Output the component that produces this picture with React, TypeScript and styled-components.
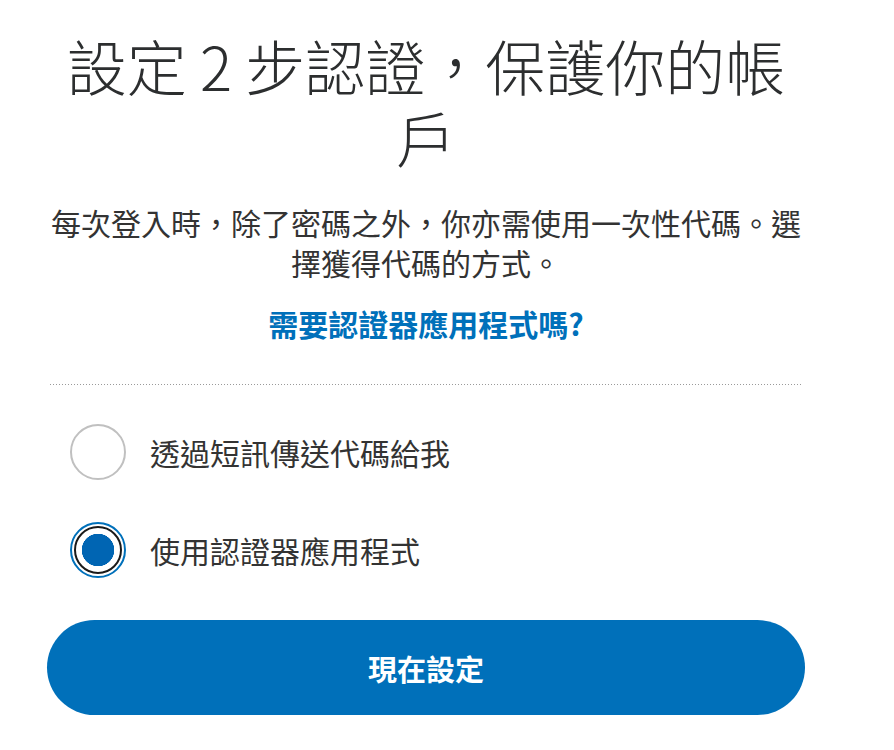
import React, { useState } from "react";
import styled, { createGlobalStyle } from "styled-components";

const GlobalStyle = createGlobalStyle`
  body {
    margin: 0;
    background: #ffffff;
    font-family: "Noto Sans CJK TC", "Liberation Sans", sans-serif;
    color: #2c2e2f;
  }
`;

const options = [
  { id: "sms", label: "透過短訊傳送代碼給我" },
  { id: "app", label: "使用認證器應用程式" },
];

const App = () => {
  const [selected, setSelected] = useState("app");

  return (
    <>
      <GlobalStyle />
      <Page>
        <Title>設定 2 步認證，保護你的帳戶</Title>
        <Lead>每次登入時，除了密碼之外，你亦需使用一次性代碼。選擇獲得代碼的方式。</Lead>
        <HelpLink href="#">需要認證器應用程式嗎?</HelpLink>
        <Divider />
        <Options>
          {options.map((option) => (
            <Option key={option.id} onClick={() => setSelected(option.id)}>
              <Radio $checked={selected === option.id} />
              <OptionLabel>{option.label}</OptionLabel>
            </Option>
          ))}
        </Options>
        <PrimaryButton>現在設定</PrimaryButton>
      </Page>
    </>
  );
};

const Page = styled.main`
  display: flex;
  flex-direction: column;
  align-items: center;
  width: 758px;
  margin-left: 47px;
  padding-top: 29px;
`;

const Title = styled.h1`
  margin: 0;
  font-size: 60px;
  line-height: 72px;
  font-weight: 300;
  text-align: center;
  color: #2c2e2f;
`;

const Lead = styled.p`
  margin: 29px 0 0;
  font-size: 30px;
  line-height: 40px;
  font-weight: 400;
  text-align: center;
  color: #333333;
`;

const HelpLink = styled.a`
  margin-top: 21px;
  font-size: 30px;
  line-height: 40px;
  font-weight: 700;
  color: #0070ba;
  text-decoration: none;
`;

const Divider = styled.hr`
  align-self: stretch;
  margin: 41px 3px 0;
  height: 1px;
  border: none;
  background-image: linear-gradient(to right, #9a9a9a 1px, transparent 1px);
  background-size: 3px 1px;
`;

const Options = styled.div`
  align-self: stretch;
  display: flex;
  flex-direction: column;
  gap: 42px;
  margin-top: 39px;
  padding-left: 23px;
`;

const Option = styled.label`
  display: flex;
  align-items: center;
  gap: 24px;
  cursor: pointer;
`;

const Radio = styled.span<{ $checked: boolean }>`
  position: relative;
  flex: 0 0 auto;
  box-sizing: border-box;
  width: 56px;
  height: 56px;
  border-radius: 50%;
  border: 2px solid ${({ $checked }) => ($checked ? "#0070ba" : "#c0c0c0")};
  background: #ffffff;

  &::after {
    content: "";
    display: ${({ $checked }) => ($checked ? "block" : "none")};
    position: absolute;
    inset: 2px;
    border-radius: 50%;
    border: 2px solid #1a1a1a;
    background: radial-gradient(circle, #0065b3 0 16px, #ffffff 16.5px);
  }
`;

const OptionLabel = styled.span`
  font-size: 30px;
  line-height: 40px;
  color: #333333;
`;

const PrimaryButton = styled.button`
  align-self: stretch;
  margin-top: 42px;
  height: 95px;
  border: none;
  border-radius: 48px;
  background: #0070ba;
  color: #ffffff;
  font-family: "Noto Sans CJK TC", "Liberation Sans", sans-serif;
  font-size: 29px;
  font-weight: 700;
  cursor: pointer;
`;

export default App;
